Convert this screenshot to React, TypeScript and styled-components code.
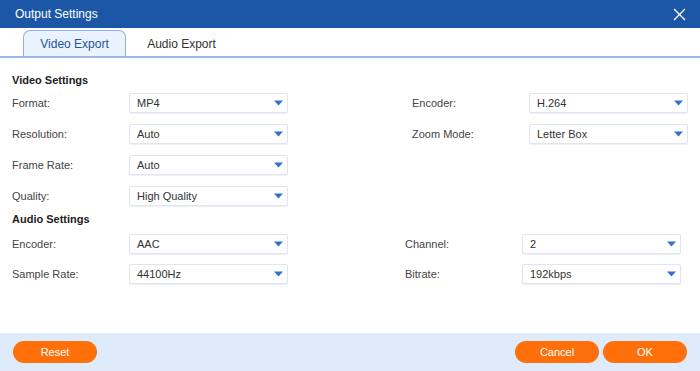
import * as React from 'react';
import styled, {createGlobalStyle} from 'styled-components';

interface Field {
  label: string;
  value: string;
}

interface SectionData {
  title: string;
  left: Field[];
  right: Field[];
  rightPad: number;
  rowGap: number;
  titleGap: number;
}

const sections: SectionData[] = [
  {
    title: 'Video Settings',
    left: [
      {label: 'Format:', value: 'MP4'},
      {label: 'Resolution:', value: 'Auto'},
      {label: 'Frame Rate:', value: 'Auto'},
      {label: 'Quality:', value: 'High Quality'},
    ],
    right: [
      {label: 'Encoder:', value: 'H.264'},
      {label: 'Zoom Mode:', value: 'Letter Box'},
    ],
    rightPad: 12,
    rowGap: 11,
    titleGap: 6,
  },
  {
    title: 'Audio Settings',
    left: [
      {label: 'Encoder:', value: 'AAC'},
      {label: 'Sample Rate:', value: '44100Hz'},
    ],
    right: [
      {label: 'Channel:', value: '2'},
      {label: 'Bitrate:', value: '192kbps'},
    ],
    rightPad: 19,
    rowGap: 10,
    titleGap: 8,
  },
];

const GlobalStyle = createGlobalStyle`
  html, body {
    margin: 0;
    padding: 0;
    background: #fff;
  }
  body {
    font-family: "Liberation Sans", Arial, sans-serif;
    color: #333;
  }
`;

const Arrow = () => (
  <svg width="9" height="6" viewBox="0 0 9 6">
    <path d="M0 0.5 H9 L4.5 5.5 Z" fill="#2e72d2" />
  </svg>
);

const CloseIcon = () => (
  <svg width="13" height="13" viewBox="0 0 13 13">
    <path d="M1 1 L12 12 M12 1 L1 12" stroke="#fff" strokeWidth="1.3" />
  </svg>
);

function renderRow(left?: Field, right?: Field, key?: number): JSX.Element {
  return (
    <React.Fragment key={key}>
      {left ? <Label>{left.label}</Label> : <span />}
      {left ? (
        <Select>
          <span>{left.value}</span>
          <Arrow />
        </Select>
      ) : (
        <span />
      )}
      <span />
      {right ? <Label>{right.label}</Label> : <span />}
      {right ? (
        <Select>
          <span>{right.value}</span>
          <Arrow />
        </Select>
      ) : (
        <span />
      )}
    </React.Fragment>
  );
}

export default function App(): JSX.Element {
  return (
    <Dialog>
      <GlobalStyle />
      <TitleBar>
        <Title>Output Settings</Title>
        <CloseButton>
          <CloseIcon />
        </CloseButton>
      </TitleBar>
      <Tabs>
        <Tab active>Video Export</Tab>
        <Tab>Audio Export</Tab>
      </Tabs>
      <Body>
        {sections.map(section => {
          const count = Math.max(section.left.length, section.right.length);
          const rows = [];
          for (let i = 0; i < count; i++) {
            rows.push(renderRow(section.left[i], section.right[i], i));
          }
          return (
            <Section key={section.title}>
              <SectionTitle gap={section.titleGap}>{section.title}</SectionTitle>
              <FieldGrid rightPad={section.rightPad} rowGap={section.rowGap}>
                {rows}
              </FieldGrid>
            </Section>
          );
        })}
      </Body>
      <Footer>
        <Button>Reset</Button>
        <FooterRight>
          <Button>Cancel</Button>
          <Button>OK</Button>
        </FooterRight>
      </Footer>
    </Dialog>
  );
}

const Dialog = styled.div`
  width: 700px;
  height: 371px;
  display: flex;
  flex-direction: column;
  overflow: hidden;
`;

const TitleBar = styled.div`
  height: 28px;
  flex-shrink: 0;
  background: #1b57a6;
  display: flex;
  align-items: center;
  justify-content: space-between;
  padding: 0 14px 0 15px;
`;

const Title = styled.div`
  color: #fff;
  font-size: 12px;
`;

const CloseButton = styled.div`
  display: flex;
  align-items: center;
`;

const Tabs = styled.div`
  height: 30px;
  flex-shrink: 0;
  display: flex;
  align-items: flex-end;
  padding-left: 23px;
  border-bottom: 2px solid #9bb8e4;
  box-sizing: border-box;
`;

const Tab = styled.div<{active?: boolean}>`
  width: 103px;
  height: 26px;
  box-sizing: border-box;
  display: flex;
  align-items: center;
  justify-content: center;
  font-size: 12px;
  color: ${p => (p.active ? '#24559e' : '#333')};
  background: ${p => (p.active ? '#eaf2fd' : 'transparent')};
  border: ${p => (p.active ? '1px solid #8fb0e0' : '1px solid transparent')};
  border-bottom: none;
  border-radius: 7px 7px 0 0;
  margin-right: 4px;
`;

const Body = styled.div`
  flex: 1;
  padding-top: 15px;
`;

const Section = styled.div`
  margin-bottom: 6px;
`;

const SectionTitle = styled.div<{gap: number}>`
  font-size: 11px;
  font-weight: bold;
  color: #222;
  padding-left: 12px;
  line-height: 14px;
  margin-bottom: ${p => p.gap}px;
`;

const FieldGrid = styled.div<{rightPad: number; rowGap: number}>`
  display: grid;
  grid-template-columns: 117px 159px 1fr 117px 159px;
  row-gap: ${p => p.rowGap}px;
  padding: 0 ${p => p.rightPad}px 0 12px;
  align-items: center;
`;

const Label = styled.div`
  font-size: 11px;
  color: #444;
`;

const Select = styled.div`
  height: 20px;
  box-sizing: border-box;
  border: 1px solid #dfe6f1;
  border-radius: 2px;
  background: #fff;
  box-shadow: 0 1px 1px rgba(180, 195, 220, 0.25);
  display: flex;
  align-items: center;
  justify-content: space-between;
  padding: 0 4px 0 7px;
  font-size: 11px;
  color: #333;
`;

const Footer = styled.div`
  height: 38px;
  flex-shrink: 0;
  background: #deebfb;
  display: flex;
  align-items: center;
  justify-content: space-between;
  padding: 0 13px;
`;

const FooterRight = styled.div`
  display: flex;
  gap: 4px;
`;

const Button = styled.div`
  width: 84px;
  height: 22px;
  border-radius: 11px;
  background: #ff700b;
  color: #fff;
  font-size: 11px;
  display: flex;
  align-items: center;
  justify-content: center;
`;
